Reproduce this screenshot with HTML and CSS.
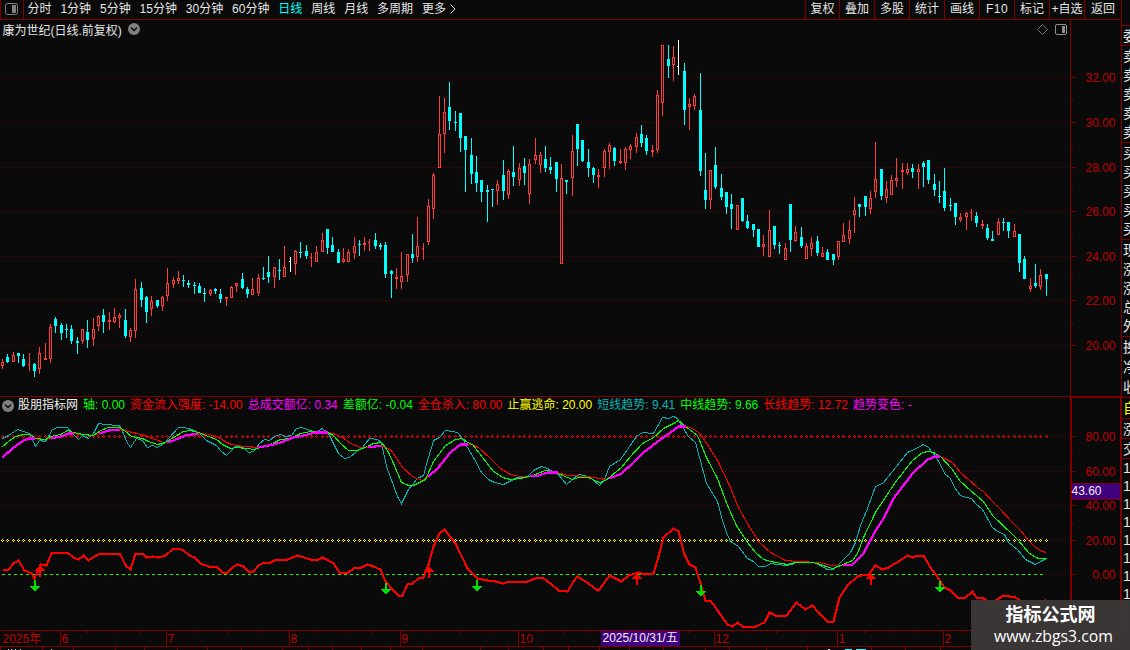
FILE: index.html
```html
<!DOCTYPE html>
<html lang="zh-CN">
<head>
  <meta charset="UTF-8" />
  <title>康为世纪 - 日线</title>
  <link rel="stylesheet" href="styles.css">
</head>
<body>
  <div class="app">
    <div class="main">
      <div class="toolbar">
        <div class="panel-btn">
          <svg width="13" height="12" viewBox="0 0 13 12">
            <rect x="0.5" y="0.5" width="12" height="11" rx="2" fill="none" stroke="#808080" />
            <rect x="7" y="2" width="4" height="8" fill="#808080" />
          </svg>
        </div>
        <div class="periods">
          <span>分时</span>
          <span>1分钟</span>
          <span>5分钟</span>
          <span>15分钟</span>
          <span>30分钟</span>
          <span>60分钟</span>
          <span class="active">日线</span>
          <span>周线</span>
          <span>月线</span>
          <span>多周期</span>
          <span class="more">更多
            <svg width="6" height="10" viewBox="0 0 6 10"><path d="M0.5 0.5L5 5L0.5 9.5" fill="none" stroke="#e0e0e0" /></svg>
          </span>
        </div>
        <div class="tools">
          <span>复权</span>
          <span>叠加</span>
          <span>多股</span>
          <span>统计</span>
          <span>画线</span>
          <span class="f10">F10</span>
          <span>标记</span>
          <span>+自选</span>
          <span>返回</span>
        </div>
      </div>

      <div class="title-bar">
        <div class="title">
          <span>康为世纪(日线.前复权)</span>
          <svg width="12" height="12" viewBox="0 0 12 12">
            <circle cx="6" cy="6" r="6" fill="#808080" />
            <path d="M3 4.5L6 7.5L9 4.5" fill="none" stroke="#0a0a0a" stroke-width="1.4" />
          </svg>
        </div>
        <div class="title-icons">
          <svg width="11" height="11" viewBox="0 0 11 11"><path d="M5.5 0.5L10.5 5.5L5.5 10.5L0.5 5.5Z" fill="none" stroke="#707070" /></svg>
          <svg width="12" height="11" viewBox="0 0 12 11">
            <rect x="0.5" y="0.5" width="11" height="10" rx="1.5" fill="none" stroke="#909090" />
            <rect x="7" y="2" width="3" height="7" fill="#909090" />
          </svg>
        </div>
      </div>

      <svg id="price" class="chart" width="1122" height="356" viewBox="0 40 1122 356"></svg>

      <div class="legend">
        <svg width="12" height="12" viewBox="0 0 12 12">
          <circle cx="6" cy="6" r="6" fill="#808080" />
          <path d="M3 4.5L6 7.5L9 4.5" fill="none" stroke="#0a0a0a" stroke-width="1.4" />
        </svg>
        <span class="white">股朋指标网</span>
        <span class="green">轴: 0.00</span>
        <span class="red">资金流入强度: -14.00</span>
        <span class="magenta">总成交额亿: 0.34</span>
        <span class="green">差额亿: -0.04</span>
        <span class="red">全仓杀入: 80.00</span>
        <span class="yellow">止赢逃命: 20.00</span>
        <span class="cyan">短线趋势: 9.41</span>
        <span class="green">中线趋势: 9.66</span>
        <span class="red">长线趋势: 12.72</span>
        <span class="magenta">趋势变色: -</span>
        <i class="axis-head"></i>
      </div>

      <svg id="indicator" class="chart" width="1122" height="216" viewBox="0 414 1122 216"></svg>
      <svg id="timeline" class="chart" width="1122" height="17" viewBox="0 630 1122 17"></svg>
      <div class="index-bar">
        <svg id="indexTicks" class="chart" width="1122" height="3" viewBox="0 647 1122 3"></svg>
      </div>
    </div>

    <div class="side">
      <div class="group blank"></div>
      <div class="group head"><span>委比</span></div>
      <div class="group five"><span>卖五</span><span>卖四</span><span>卖三</span><span>卖二</span><span>卖一</span></div>
      <div class="group five"><span>买一</span><span>买二</span><span>买三</span><span>买四</span><span>买五</span></div>
      <div class="group five"><span>现价</span><span>涨跌</span><span>涨幅</span><span>总量</span><span>外盘</span></div>
      <div class="group three"><span>换手</span><span>净资</span><span>收益</span></div>
      <div class="group tab"><span class="yellow">自选</span></div>
      <div class="group row"><span>涨速</span></div>
      <div class="group row"><span>交易</span></div>
      <div class="group ticks"><span>14</span><span>14</span><span>14</span><span>14</span><span>14</span><span>14</span><span>14</span><span>14</span></div>
    </div>

    <div class="watermark">
      <div class="site">指标公式网</div>
      <div class="url">www.zbgs3.com</div>
    </div>
  </div>

  <script>
    // x, high, body top, body bottom, low, type (r = up, c = down, w = flat)
    const candles = `
      2 359 362 366 369 r;7 354 357 362 363 c;13 352 355 362 362 r;18 353 353 356 363 c;23 354 359 366 367 c;
      29 353 364 365 371 r;34 363 364 371 377 c;39 347 353 369 374 r;45 343 358 360 360 r;50 324 327 359 363 r;
      55 317 319 326 333 c;61 323 325 333 340 c;66 324 329 330 338 c;71 325 329 341 344 c;77 337 341 343 354 c;
      82 329 329 341 344 r;87 320 332 340 348 c;93 318 329 339 346 r;98 315 316 326 331 r;103 309 315 322 333 c;
      109 312 320 322 330 r;114 308 317 322 323 r;119 313 315 318 328 r;125 309 320 336 338 c;130 328 330 337 342 r;
      135 279 289 331 338 r;141 282 288 300 307 c;146 296 297 312 323 c;151 296 301 309 316 r;157 300 300 306 308 c;
      162 296 297 306 311 r;167 268 283 296 301 r;173 277 280 284 288 r;178 271 278 281 284 r;183 275 280 281 287 c;
      188 280 283 285 288 c;194 282 285 286 294 c;199 283 286 293 293 c;204 288 293 294 302 c;210 289 290 294 296 r;
      215 288 289 291 294 c;220 289 294 299 303 c;226 297 297 299 306 r;231 286 287 298 298 r;236 283 283 286 292 r;
      242 273 279 288 289 c;247 287 289 294 298 c;252 278 289 295 295 r;258 274 278 293 296 r;263 267 278 279 280 c;
      268 256 272 277 283 c;274 267 267 277 288 r;279 259 270 271 280 c;284 246 267 277 277 r;290 257 261 262 272 w;
      295 250 251 264 275 r;300 242 252 253 258 c;306 245 251 256 259 c;311 253 257 258 267 r;316 246 252 262 262 r;
      322 233 240 252 252 r;327 229 229 248 254 c;332 237 245 252 252 c;338 249 252 263 263 c;343 248 259 262 263 r;
      348 249 252 262 262 r;354 237 246 253 259 r;359 240 244 245 256 c;364 237 243 245 251 r;369 239 242 243 251 r;
      375 233 240 246 249 c;380 243 245 247 250 c;385 242 245 274 278 c;391 270 271 274 298 c;396 268 277 279 289 r;
      401 252 276 282 289 r;407 254 254 275 282 r;412 234 254 258 263 c;417 217 246 257 262 r;423 243 248 249 260 r;
      428 199 206 242 245 r;433 173 175 209 219 r;439 96 134 168 168 r;444 98 112 134 153 r;449 82 107 121 130 c;
      455 111 122 123 131 c;460 113 113 138 152 c;465 136 136 150 192 c;471 138 155 174 184 c;476 156 172 183 192 c;
      481 180 180 192 202 c;487 185 190 192 222 c;492 189 189 190 207 c;497 180 184 191 205 r;503 160 175 191 200 c;
      508 169 171 195 199 r;513 146 172 177 186 c;519 163 168 180 186 r;524 158 166 173 185 c;529 159 164 194 204 r;
      535 138 155 160 164 r;540 152 155 165 173 r;545 146 159 168 172 c;550 157 167 170 174 c;556 162 162 179 192 c;
      561 164 178 264 264 r;566 180 180 182 194 c;572 135 151 178 196 r;577 124 124 149 166 c;582 140 140 161 162 c;
      588 149 162 168 177 c;593 167 168 175 183 c;598 169 175 177 188 r;604 149 151 168 177 r;609 143 145 152 169 r;
      614 147 148 161 166 c;620 149 161 163 164 r;625 147 149 163 170 r;630 144 146 150 159 r;636 133 137 147 153 r;
      641 125 134 143 147 c;646 135 138 151 155 c;652 145 150 152 157 r;657 90 95 150 153 r;662 45 45 103 116 r;
      668 45 59 66 78 c;673 46 57 65 81 r;678 40 66 67 75 w;684 63 71 110 125 c;689 98 104 107 130 r;
      694 94 96 106 110 r;700 73 110 171 176 c;705 153 190 200 209 c;710 170 170 200 209 r;715 147 165 187 189 c;
      721 174 188 197 200 c;726 192 192 207 214 c;731 194 204 209 229 c;737 205 205 230 230 r;742 198 198 221 222 c;
      747 215 221 228 229 c;753 224 224 230 237 c;758 229 229 247 247 c;763 235 244 247 256 r;769 210 230 257 257 r;
      774 226 226 245 249 c;779 242 245 246 254 c;785 243 248 260 260 r;790 204 204 240 252 c;795 226 232 241 242 r;
      801 227 237 246 248 c;806 243 246 259 259 r;811 237 243 249 256 r;817 236 241 253 256 c;822 247 253 257 257 r;
      827 249 252 260 260 c;833 254 254 260 265 c;838 241 241 257 260 r;843 223 235 242 242 r;849 220 230 239 244 r;
      854 197 210 215 233 r;859 204 204 207 217 c;865 196 196 207 216 c;870 191 198 209 214 r;875 142 179 192 198 r;
      881 169 169 196 200 c;886 181 189 198 203 r;891 175 180 195 195 r;896 158 178 181 187 r;902 163 170 172 189 r;
      907 163 169 173 175 r;912 164 168 172 178 c;918 164 169 172 189 r;923 161 163 167 187 c;928 160 160 180 184 c;
      934 174 184 190 196 c;939 181 196 197 203 c;944 168 191 208 211 c;950 198 205 206 211 c;955 203 203 217 225 c;
      960 213 217 220 222 r;966 212 213 217 230 r;971 209 212 213 221 r;976 212 216 223 227 c;982 220 224 226 229 r;
      987 224 228 238 240 c;992 231 239 241 241 c;998 218 222 235 235 r;1003 218 222 223 231 c;1008 222 222 231 238 c;
      1014 224 231 237 237 r;1019 234 234 263 272 c;1024 256 259 279 279 c;1030 278 286 289 292 r;1035 264 283 286 288 c;
      1040 269 275 287 290 r;1046 274 274 279 296 c`.trim().split(";").map(row => {
        const p = row.trim().split(" ");
        return { x: +p[0], high: +p[1], top: +p[2], bottom: +p[3], low: +p[4], type: p[5] };
      });

    const shortTrend = "2,438 8,435 17,429 29,433 35,446 39,440 45,441 52,429 57,427 67,427 71,432 78,439 82,435 88,438 93,433 98,423 104,424 119,425 123,433 126,441 130,447 136,438 142,440 147,447 152,445 157,447 165,442 168,438 178,427 184,427 194,430 200,434 206,440 216,445 221,451 226,455 235,446 243,447 248,452 253,451 259,443 264,439 269,440 274,436 280,434 285,436 291,435 296,428 301,427 310,430 315,432 322,428 328,433 333,443 338,453 344,458 349,457 356,451 362,447 369,438 377,439 381,442 386,466 397,496 401,503 408,489 417,478 423,475 426,464 433,440 439,437 445,430 451,431 457,432 462,438 467,447 473,457 481,472 488,479 494,482 503,484 517,477 527,476 533,470 541,466 547,468 558,474 566,484 578,474 584,475 591,478 599,485 604,479 609,466 620,459 636,436 642,432 653,433 662,417 668,418 673,416 677,418 683,428 688,436 695,442 706,483 717,501 722,520 726,532 730,541 738,546 747,558 753,561 758,566 765,566 770,563 777,564 785,565 792,564 797,561 802,562 813,562 818,564 827,569 833,569 838,564 842,560 850,552 855,542 860,525 867,508 875,486 882,483 888,476 907,452 916,448 923,444 928,447 935,456 940,464 944,473 950,478 954,487 960,495 966,497 971,498 975,503 982,509 992,527 997,531 1004,534 1008,542 1017,549 1025,559 1035,564 1042,560 1046,558";
    const midTrend = "2,446 8,441 15,436 23,434 30,434 35,438 45,439 50,436 60,434 67,430 73,432 82,434 93,435 100,430 108,427 119,427 125,431 131,436 142,438 148,441 157,444 165,442 173,437 183,431 190,430 198,432 208,436 216,439 222,444 230,448 235,447 247,448 254,449 263,446 272,443 280,439 290,438 300,433 310,431 327,432 333,435 340,443 348,450 357,450 367,446 373,443 381,442 385,447 388,452 393,463 401,482 408,485 413,485 425,479 433,461 445,445 455,439 462,438 467,442 472,444 482,457 493,471 502,477 510,479 520,478 532,475 545,470 553,471 562,475 572,479 578,477 588,477 599,482 605,480 610,476 621,467 630,456 642,443 653,437 663,428 673,423 678,420 685,426 697,435 706,457 717,478 727,505 736,525 747,542 755,552 763,559 770,561 787,564 795,562 813,562 832,568 838,566 852,560 857,553 863,537 875,512 890,489 897,479 912,460 922,452 928,451 933,452 940,456 951,468 960,481 970,490 983,501 993,516 1010,532 1018,540 1028,552 1035,557 1039,558 1046,558";
    const longTrend = "2,457 12,448 23,440 30,438 34,438 39,439 45,439 50,438 60,436 68,433 72,433 82,434 93,435 99,433 108,430 119,429 128,431 137,433 147,436 155,439 163,442 167,442 173,440 185,435 198,433 208,434 218,437 228,443 235,445 245,446 258,447 273,444 283,441 293,437 303,435 315,432 327,432 333,433 342,437 350,443 360,447 368,447 381,445 391,450 402,467 412,476 422,480 428,476 437,468 450,452 460,444 467,444 472,444 478,447 490,458 500,468 510,474 520,476 530,476 538,475 547,472 557,472 567,475 587,476 605,479 609,478 621,473 633,462 643,452 660,439 670,432 678,426 685,426 692,428 698,432 703,438 717,460 730,487 738,507 748,525 760,543 770,552 785,560 797,561 818,562 832,565 843,565 852,564 863,553 875,530 882,520 893,498 912,473 927,459 935,456 939,456 944,458 952,462 960,472 977,487 983,491 992,501 1000,509 1010,520 1020,530 1028,540 1035,547 1042,551 1046,552";
    const flow = "2,569 8,569 13,563 18,560 24,570 31,573 34,578 40,564 46,565 51,553 57,552 67,552 73,557 78,559 83,555 88,560 99,553 119,553 126,566 130,569 135,553 142,553 146,557 152,556 158,557 165,555 173,548 178,548 183,550 189,555 194,557 200,563 208,566 216,566 222,572 227,572 232,567 237,564 243,566 248,571 253,571 258,565 263,562 270,562 276,559 287,559 297,555 310,559 318,559 322,557 328,560 333,563 339,572 348,572 353,568 361,567 367,564 373,566 380,569 385,581 392,589 398,595 402,595 407,584 412,583 418,578 423,577 428,564 433,546 439,533 444,529 455,543 467,568 477,578 487,580 495,581 503,583 508,581 527,581 537,577 542,577 550,583 558,590 567,591 573,581 577,576 588,583 597,590 599,589 609,575 621,581 628,575 638,572 645,574 653,573 658,556 663,537 673,528 678,531 684,554 689,564 695,567 700,583 705,600 710,600 727,624 732,626 737,622 742,626 755,626 764,622 769,612 775,615 786,615 796,602 805,609 812,605 818,612 827,621 833,621 839,597 847,585 857,576 865,574 868,574 875,565 882,569 888,567 898,561 907,555 912,557 918,555 923,555 930,567 938,578 944,587 950,590 957,597 965,597 972,591 976,597 983,598 990,602 995,600 1003,595 1015,597 1025,604 1040,604 1046,599";
    // parts of the long trend where it is rising
    const rising = [[2, 34], [50, 72], [99, 119], [167, 198], [258, 327], [368, 381], [428, 467], [530, 557], [609, 685], [843, 939]];

    const DARK = "#800000";
    const colors = { r: "#ff3c3c", c: "#00ffff", w: "#ffffff" };

    function rect(x, y, w, h, fill) {
      return `<rect x="${x}" y="${y}" width="${w}" height="${h}" fill="${fill}"/>`;
    }

    function line(points, color, width) {
      return `<polyline points="${points}" transform="translate(.5 .5)" fill="none" stroke="${color}" stroke-width="${width}"/>`;
    }

    function grid(y) {
      return `<path d="M1 ${y + 0.5}H1068" stroke="${DARK}" stroke-dasharray="1 3"/>`;
    }

    function label(x, y, text, cls) {
      return `<text x="${x}" y="${y}" class="${cls}">${text}</text>`;
    }

    function drawPrice() {
      let out = "";
      [[32, 77], [30, 122], [28, 167], [26, 211], [24, 256], [22, 300], [20, 345]].forEach(([v, y]) => {
        out += grid(y) + rect(1071, y, 5, 1, DARK) + label(1115.5, y + 5, v + ".00", "scale");
      });
      [100, 145, 189, 234, 278, 323].forEach(y => out += rect(1071, y, 2, 1, DARK));
      out += rect(1070, 40, 1, 356, DARK) + rect(1121, 40, 1, 356, DARK);

      candles.forEach(c => {
        const color = colors[c.type];
        const h = c.bottom - c.top;
        out += rect(c.x, c.high, 1, c.low - c.high, color);
        if (h === 1 && c.type !== "c") {
          out += rect(c.x - 1, c.top, 1, 1, color);
        } else {
          out += rect(c.x - 1, c.top, 3, h, color);
          if (c.type === "r" && h > 2) out += rect(c.x, c.top + 1, 1, h - 2, "#0a0a0a");
        }
      });
      document.getElementById("price").innerHTML = out;
    }

    function drawIndicator() {
      let out = "";
      [[80, 436], [60, 471], [40, 505], [20, 540], [0, 574]].forEach(([v, y]) => {
        out += grid(y) + rect(1072, y, 4, 1, DARK) + label(1115.5, y + 5, v + ".00", "scale");
      });
      [454, 523, 557].forEach(y => out += rect(1072, y, 1, 1, DARK));
      out += rect(1070, 414, 2, 216, DARK) + rect(1120, 414, 2, 216, DARK);

      // per-bar rings on the 80 and 20 levels
      [[436, "#ff0000"], [540, "#ffff00"]].forEach(([y, color]) => {
        candles.forEach(({ x }) => {
          out += rect(x - 1, y, 1, 1, color) + rect(x + 1, y, 1, 1, color) + rect(x, y - 1, 1, 1, color) + rect(x, y + 1, 1, 1, color);
        });
      });
      out += `<path d="M2 574.5H1044" stroke="#00ff00" stroke-dasharray="3 3"/>`;

      out += line(shortTrend, "#00b4b4", 1) + line(longTrend, "#ff0000", 1.1) + line(midTrend, "#00ff00", 1.1);
      const pts = longTrend.split(" ");
      rising.forEach(([from, to]) => {
        const part = pts.filter(p => parseInt(p) >= from && parseInt(p) <= to);
        out += line(part.join(" "), "#ff00ff", 2.2);
      });
      out += line(flow, "#ff0000", 2);

      [[40, 565], [429, 566], [637, 573], [871, 573]].forEach(([x, y]) => {
        out += `<path d="M${x} ${y}L${x + 5} ${y + 6}H${x + 1}V${y + 12}H${x - 1}V${y + 6}H${x - 5}Z" fill="#ff0000"/>`;
      });
      [[35, 580], [386, 583], [477, 580], [701, 585], [940, 581]].forEach(([x, y]) => {
        out += `<path d="M${x - 1} ${y}H${x + 1}V${y + 6}H${x + 5}L${x} ${y + 12}L${x - 5} ${y + 6}H${x - 1}Z" fill="#00e000"/>`;
      });

      out += rect(1071, 483, 50, 17, DARK) + rect(1072, 484, 48, 15, "#400080") + label(1071.5, 495, "43.60", "mark");
      document.getElementById("indicator").innerHTML = out;
    }

    function drawTimeline() {
      let out = rect(0, 630, 1122, 1, DARK) + rect(0, 646, 1122, 1, DARK);
      out += label(2.5, 643, "2025年", "month");
      [[60, 6], [166, 7], [289, 8], [400, 9], [518, 10], [714, 12], [837, 1], [943, 2]].forEach(([x, m]) => {
        out += rect(x, 631, 1, 15, DARK) + label(x + 1.5, 643, m, "month");
      });
      [87, 113, 140, 197, 228, 258, 317, 345, 372, 430, 459, 489, 541, 563, 586, 688, 745, 776, 806, 864, 890, 917, 962]
        .forEach(x => out += rect(x, 631, 1, 2, DARK));
      out += rect(601, 631, 79, 15, "#400080") + label(602.5, 642, "2025/10/31/五", "mark");
      document.getElementById("timeline").innerHTML = out;

      let ticks = "";
      [0, 42, 73, 115, 144, 177, 207, 241, 282, 308, 332, 361, 390, 422, 480, 508, 543, 568, 599, 629, 663, 705, 729, 766, 807, 871, 905, 940]
        .forEach(x => ticks += rect(x, 647, 1, 3, DARK));
      [[8, 1], [11, 1], [15, 1], [20, 1], [51, 1], [828, 2]].forEach(([x, w]) => ticks += rect(x, 649, w, 1, "#e0e0e0"));
      ticks += rect(845, 649, 7, 1, "#00ffff") + rect(856, 649, 10, 1, "#00ffff");
      document.getElementById("indexTicks").innerHTML = ticks;
    }

    drawPrice();
    drawIndicator();
    drawTimeline();
  </script>
</body>
</html>
```
FILE: styles.css
```css
body {
  margin: 0;
  background: #0a0a0a;
  color: #e6e6e6;
  font-family: "Liberation Sans", "Noto Sans CJK SC", sans-serif;
  font-size: 12px;
  overflow: hidden;
}

.app {
  position: relative;
  display: flex;
  width: 1130px;
  height: 650px;
  overflow: hidden;
}

.main {
  width: 1122px;
  flex: none;
}

.toolbar {
  display: flex;
  height: 20px;
  box-sizing: border-box;
  border-bottom: 1px solid #800000;
  border-right: 1px solid #800000;
  line-height: 19px;
  white-space: nowrap;
}

.panel-btn {
  width: 18px;
  padding-left: 4px;
  border-left: 1px solid #800000;
  border-right: 1px solid #800000;
  display: flex;
  align-items: center;
}

.panel-btn svg {
  margin-top: -2px;
}

.periods {
  display: flex;
  gap: 8.9px;
  padding-left: 3.5px;
  flex: 1;
}

.periods .active {
  color: #00ffff;
}

.more {
  display: flex;
  align-items: center;
  gap: 4px;
}

.more svg {
  margin-top: -2px;
}

.tools {
  display: grid;
  grid-template-columns: 34px 35px 35px 35px 35px 35px 35px 35px 37px;
  height: 19px;
}

.tools span {
  border-left: 1px solid #800000;
  text-align: center;
}

.tools .f10 {
  letter-spacing: 0.5px;
}

.title-bar {
  display: flex;
  justify-content: space-between;
  height: 20px;
  box-sizing: border-box;
  border-right: 1px solid #800000;
}

.title {
  display: flex;
  align-items: center;
  gap: 6px;
  padding-left: 2.5px;
  height: 18px;
}

.title-icons {
  display: flex;
  align-items: center;
  justify-content: flex-end;
  gap: 7px;
  padding-right: 3px;
  padding-bottom: 1px;
  margin-right: 50px;
  border-right: 1px solid #800000;
}

.chart {
  display: block;
  shape-rendering: crispEdges;
}

.scale {
  fill: #c00000;
  font-size: 12px;
  text-anchor: end;
}

.month {
  fill: #c00000;
  font-size: 12px;
}

.mark {
  fill: #f0f0f0;
  font-size: 12px;
}

.legend {
  display: flex;
  align-items: center;
  gap: 5px;
  height: 18px;
  box-sizing: border-box;
  border-top: 1px solid #800000;
  padding-left: 2px;
  line-height: 17px;
  white-space: nowrap;
}

.legend svg {
  flex: none;
  margin-right: -1px;
}

.axis-head {
  width: 48px;
  height: 17px;
  margin-left: auto;
  border: 2px solid #800000;
  border-top-width: 1px;
  border-bottom: 0;
}

.white { color: #f0f0f0; }
.green { color: #00ff00; }
.red { color: #ff0000; }
.magenta { color: #ff00ff; }
.yellow { color: #ffff00; }
.cyan { color: #00b4b4; }

.index-bar {
  height: 3px;
  overflow: hidden;
}

.side {
  width: 8px;
  flex: none;
  overflow: hidden;
  font-size: 14px;
}

.group {
  display: flex;
  flex-direction: column;
  box-sizing: border-box;
  padding-left: 1px;
  border-top: 1px solid #800000;
}

.group span {
  flex: 1;
  display: flex;
  align-items: center;
  line-height: 1;
  white-space: nowrap;
}

.blank { height: 25px; border-top: 0; }
.head { height: 20px; }
.five { height: 97px; }
.three { height: 61px; }
.tab { height: 21px; }
.row { height: 20px; }
.ticks { height: 145px; }

.watermark {
  position: absolute;
  left: 971px;
  top: 600px;
  width: 159px;
  height: 50px;
  background: rgba(60, 56, 56, 0.97);
  color: #fff;
  text-align: center;
}

.site {
  font-size: 18px;
  font-weight: bold;
  line-height: 20px;
  padding-top: 5px;
}

.url {
  font-family: "Open Sans", sans-serif;
  font-size: 15.8px;
  line-height: 22px;
  padding-left: 6px;
}
```
